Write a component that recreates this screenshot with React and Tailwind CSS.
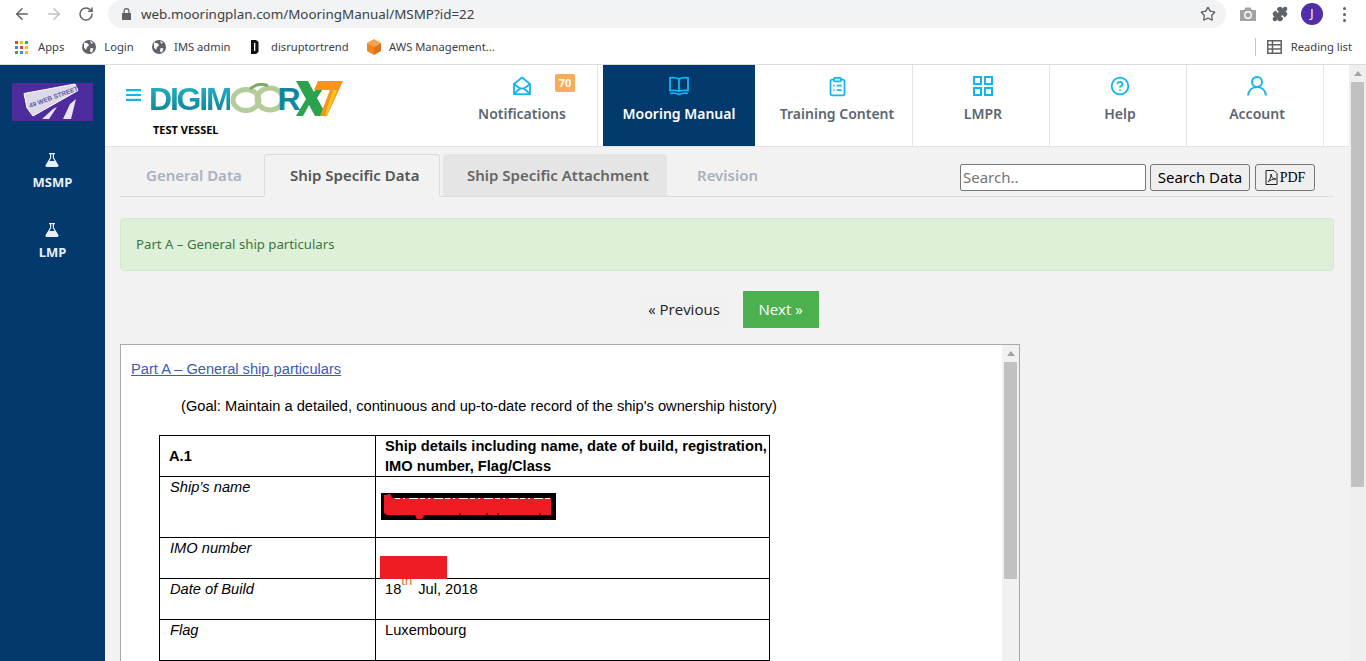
import { ArrowLeft, ArrowRight, RotateCw, Star, Puzzle, ClipboardList, CircleHelp } from 'lucide-react'

const bookmarks = [
  { label: 'Login', icon: 'globe' },
  { label: 'IMS admin', icon: 'globe' },
  { label: 'disruptortrend', icon: 'd' },
  { label: 'AWS Management...', icon: 'aws' },
]

function Globe() {
  return (
    <svg width="16" height="16" viewBox="0 0 16 16">
      <circle cx="8" cy="8" r="7" fill="#5f6368" />
      <path d="M3 3.500l4 1 1 2-2 1.500-1 3-2-2.500zM9.500 9l3 .5-1.500 4-2-1zM9 2l3 1.500-1.500 1.500z" fill="#fff" />
    </svg>
  )
}

function BookmarkIcon({ type }) {
  if (type === 'globe') return <Globe />
  if (type === 'd') {
    return (
      <svg width="16" height="16" viewBox="0 0 16 16">
        <path d="M3 1h5l2.500 2v10L8 15H3zM6 4v8h1.300V4z" fill="#111" fillRule="evenodd" />
      </svg>
    )
  }
  return (
    <svg width="16" height="18" viewBox="0 0 16 18">
      <path d="M8 1l7 4-7 4-7-4z" fill="#f7a14a" />
      <path d="M1 5l7 4v8l-7-4z" fill="#f58220" />
      <path d="M15 5l-7 4v8l7-4z" fill="#e0701a" />
    </svg>
  )
}

function AppsGrid() {
  const colors = ['#ea4335', '#fbbc04', '#34a853', '#4285f4', '#ea4335', '#fbbc04', '#34a853', '#4285f4', '#fbbc04']
  return (
    <div className="grid grid-cols-3 gap-[2px]">
      {colors.map((c, i) => (
        <span key={i} className="w-[3px] h-[3px]" style={{ backgroundColor: c }} />
      ))}
    </div>
  )
}

function BrowserChrome() {
  return (
    <div className="h-[65px] bg-white border-b border-[#dadce0] shrink-0">
      <div className="h-[30px] flex items-center">
        <div className="w-[108px] pl-[13px] flex items-center gap-[15px] text-[#5f6368] -mt-[2px]">
          <ArrowLeft size={18} strokeWidth={2} />
          <ArrowRight size={18} strokeWidth={2} className="text-[#bdc1c6] -ml-[1px]" />
          <RotateCw size={16} strokeWidth={2.2} />
        </div>
        <div className="w-[1118px] h-[28px] -mt-[2px] rounded-full bg-[#f1f3f4] flex items-center pl-[14px] pr-[10px]">
          <svg width="9" height="12" viewBox="0 0 9 12" fill="#5f6368">
            <path d="M0 5h9v7H0zM1.500 5V3a3 3 0 0 1 6 0v2H6.300V3a1.800 1.800 0 0 0-3.600 0v2z" />
          </svg>
          <span className="ml-[10px] flex-1 text-[13.4px] text-[#3c4043] font-['Noto_Sans',sans-serif]">
            web.mooringplan.com/MooringManual/MSMP?id=22
          </span>
          <Star size={16} strokeWidth={2} className="text-[#5f6368]" />
        </div>
        <div className="flex-1 flex items-center pl-[14px] -mt-[2px]">
          <svg width="16" height="14" viewBox="0 0 16 14">
            <path d="M0 3h4l1.500-2.500h5L12 3h4v11H0z" fill="#a3a3a3" />
            <circle cx="8" cy="8" r="3.200" fill="none" stroke="#fff" strokeWidth="1.400" />
          </svg>
          <Puzzle size={16} className="ml-[16px] text-[#5f6368] fill-[#5f6368]" />
          <div className="ml-[13px] w-[22px] h-[22px] rounded-full bg-[#512da8] text-white text-[12px] flex items-center justify-center font-['Noto_Sans',sans-serif]">
            J
          </div>
          <div className="flex flex-col gap-[3px] ml-[20px]">
            <span className="w-[3px] h-[3px] rounded-full bg-[#5f6368]" />
            <span className="w-[3px] h-[3px] rounded-full bg-[#5f6368]" />
            <span className="w-[3px] h-[3px] rounded-full bg-[#5f6368]" />
          </div>
        </div>
      </div>
      <div className="h-[34px] flex items-center pl-[15px] text-[11.2px] text-[#3c4043] font-['Noto_Sans',sans-serif]">
        <AppsGrid />
        <span className="ml-[10px] mr-[17px]">Apps</span>
        {bookmarks.map((b) => (
          <div key={b.label} className="flex items-center gap-[7px] mr-[17.5px]">
            <BookmarkIcon type={b.icon} />
            <span>{b.label}</span>
          </div>
        ))}
        <div className="ml-auto flex items-center">
          <span className="w-px h-[18px] bg-[#c4c7c5]" />
          <svg width="15" height="14" viewBox="0 0 15 14" className="ml-[11px]">
            <path d="M.8.8h13.400v12.400H.8zM5.500.8v12.400M.8 4.800h13.400M.8 9h13.400" fill="none" stroke="#5f6368" strokeWidth="1.500" />
          </svg>
          <span className="ml-[9px] mr-[14px]">Reading list</span>
        </div>
      </div>
    </div>
  )
}

function Flask() {
  return (
    <svg width="16" height="16" viewBox="0 0 16 16" fill="#e8eef5">
      <path d="M5 1h6v1.300h-1v3.400l4.400 7.300c.5.900-.1 2-1.100 2H2.700c-1 0-1.600-1.100-1.100-2L6 5.700V2.300H5zM7.200 2.300v3.800L5.500 9h5L8.800 6.100V2.300z" fillRule="evenodd" />
      <path d="M5.200 9.500h5.600l2 3.500c.2.400 0 .8-.4.800H3.600c-.4 0-.6-.4-.4-.8z" />
    </svg>
  )
}

function Sidebar() {
  return (
    <aside className="w-[105px] shrink-0 bg-[#03396c] flex flex-col items-center pt-[18px] font-['Noto_Sans',sans-serif]">
      <svg width="81" height="38" viewBox="0 0 81 38" className="-ml-[1px]">
        <rect width="81" height="38" fill="#4f2c9e" />
        <path d="M12 10.500L63 1l3 6.500L21 33l-6-8z" fill="#dcd9e8" stroke="#fff" />
        <path d="M30 36l11-10 4-2-8 12zM51 36l7-15 6-5-5 20z" fill="#e8e6f0" />
        <text x="18" y="25" fontSize="6.500" fontWeight="700" fill="#6a5aa0" transform="rotate(-20 18 25)" fontFamily="Liberation Sans">
          49 WEB STREET
        </text>
      </svg>
      <div className="mt-[31px] flex flex-col items-center gap-[3px]">
        <Flask />
        <span className="text-[13px] font-bold text-[#e8eef5] leading-[22px]">MSMP</span>
      </div>
      <div className="mt-[29px] flex flex-col items-center gap-[3px]">
        <Flask />
        <span className="text-[13px] font-bold text-[#e8eef5] leading-[22px]">LMP</span>
      </div>
    </aside>
  )
}

function Logo() {
  return (
    <div className="flex flex-col">
      <div className="flex items-center h-[37px]">
        <span className="-ml-[2px] text-[32px] leading-none font-bold tracking-[-2.2px] font-['Liberation_Sans',sans-serif] bg-gradient-to-b from-[#27b4c8] to-[#0f7f94] bg-clip-text text-transparent">
          DIGIM
        </span>
        <svg width="57" height="30" viewBox="0 0 57 30" className="mt-[-2px]">
          <ellipse cx="16" cy="17" rx="13" ry="10.500" fill="none" stroke="#b3cc9a" strokeWidth="5" />
          <ellipse cx="40" cy="16" rx="13" ry="11" fill="none" stroke="#b3cc9a" strokeWidth="5" />
          <path d="M20 6c6-5 12-6 18-3" fill="none" stroke="#7ea866" strokeWidth="3" />
        </svg>
        <span className="text-[32px] leading-none font-bold font-['Liberation_Sans',sans-serif] text-[#12869f] -ml-[10px]">R</span>
        <svg width="47" height="35" viewBox="0 0 47 35" className="-ml-[5px]">
          <path d="M0 0h12l6 11 7-11h7L21 17l10 18H19l-6-11-6 11H0l10-17z" fill="#2ba24c" />
          <path d="M22 0h25L31 35h-7l10-26H18z" fill="#f7941d" />
          <path d="M29 33l8-24h4L31 35z" fill="#fcc31e" />
        </svg>
      </div>
      <span className="mt-[5px] ml-[2px] text-[11px] font-bold text-black font-['Noto_Sans',sans-serif]">TEST VESSEL</span>
    </div>
  )
}

const ICON = '#12b5f3'

function MailOpenIcon() {
  return (
    <svg width="20" height="20" viewBox="0 0 20 20" fill="none" stroke={ICON} strokeWidth="1.800" strokeLinejoin="round">
      <path d="M2 8l8-6.500L18 8v10.200H2z" />
      <path d="M2 8l6 4.500h4l6-4.500M2.500 17.500L8 12.500M17.500 17.500L12 12.500" />
    </svg>
  )
}

function BookIcon() {
  return (
    <svg width="20" height="20" viewBox="0 0 20 20" fill="none" stroke={ICON} strokeWidth="1.800">
      <path d="M10 3C8.500 1.800 5 1.500 1 1.800v12.700c4-.3 7.500 0 9 1 1.500-1 5-1.300 9-1V1.800C15 1.500 11.500 1.800 10 3zM10 3v12.500" />
      <path d="M1 17.300c4-.5 7-.2 9 1.200 2-1.400 5-1.700 9-1.200" />
    </svg>
  )
}

function GridIcon() {
  return (
    <svg width="20" height="20" viewBox="0 0 20 20" fill="none" stroke={ICON} strokeWidth="2">
      <path d="M1 1h7v7H1zM12 1h7v7h-7zM1 12h7v7H1zM12 12h7v7h-7z" />
    </svg>
  )
}

function AccountIcon() {
  return (
    <svg width="20" height="20" viewBox="0 0 20 20" fill="none" stroke={ICON} strokeWidth="2">
      <circle cx="10" cy="6" r="5" />
      <path d="M1 19.500c.5-5 4-8.500 9-8.500s8.500 3.500 9 8.500" />
    </svg>
  )
}

const navItems = [
  { label: 'Notifications', w: 'w-[152px] pl-[1px]', icon: <MailOpenIcon />, badge: '70' },
  { label: 'Mooring Manual', w: 'w-[152px] ml-[5px]', icon: <BookIcon />, active: true },
  { label: 'Training Content', w: 'w-[158px] pl-[7px]', icon: <ClipboardList size={21} strokeWidth={2} color={ICON} /> },
  { label: 'LMPR', w: 'w-[137px] pl-[4px]', icon: <GridIcon /> },
  { label: 'Help', w: 'w-[137px] pl-[4px]', icon: <CircleHelp size={20} strokeWidth={2.2} color={ICON} /> },
  { label: 'Account', w: 'w-[137px] pl-[4px]', icon: <AccountIcon /> },
]

function Header() {
  return (
    <header className="h-[82px] shrink-0 bg-white border-b border-[#e4e4e4] flex pl-[21px]">
      <div className="w-[320px] shrink-0 flex pt-[15px]">
        <svg width="15" height="12" viewBox="0 0 15 12" fill={ICON} className="mt-[9px] mr-[10px]">
          <path d="M0 0h15v2.200H0zM0 4.900h15v2.200H0zM0 9.800h15V12H0z" />
        </svg>
        <Logo />
      </div>
      {navItems.map((item) => (
        <div
          key={item.label}
          className={`${item.w} shrink-0 h-[81px] relative flex flex-col items-center pt-[9px] font-['Noto_Sans',sans-serif] ${
            item.active ? 'bg-[#03396c]' : 'border-r border-[#e4e4e4]'
          }`}
        >
          <div className="h-[24px] flex items-center">{item.icon}</div>
          <span className={`mt-[5px] text-[14px] font-semibold ${item.active ? 'text-white' : 'text-[#5c6670]'}`}>
            {item.label}
          </span>
          {item.badge && (
            <span className="absolute left-[109px] top-[9px] w-[20px] h-[18px] rounded-[2px] bg-[#f8ac59] text-white text-[11px] font-bold flex items-center justify-center">
              {item.badge}
            </span>
          )}
        </div>
      ))}
    </header>
  )
}

function Tabs() {
  return (
    <div className="h-[43px] mt-[7px] border-b border-[#dddddd] flex font-['Noto_Sans',sans-serif] text-[15px] font-semibold">
      <div className="w-[144px] pl-[26px] pt-[10px] text-[#a9b1bd]">General Data</div>
      <div className="w-[176px] h-[43px] pl-[25px] pt-[9px] text-[#555] bg-[#f2f2f2] border border-[#dddddd] border-b-[#f2f2f2] rounded-t-[3px]">
        Ship Specific Data
      </div>
      <div className="w-[224px] h-[42px] ml-[3px] pl-[24px] pt-[10px] text-[#666] bg-[#e5e5e5] rounded-t-[3px]">
        Ship Specific Attachment
      </div>
      <div className="pl-[30px] pt-[10px] text-[#a9b1bd]">Revision</div>
      <div className="ml-auto mr-[19px] mt-[10px] flex items-start font-normal text-[15px]">
        <input
          placeholder="Search.."
          className="w-[186px] h-[27px] pb-[2px] bg-white border border-[#767676] rounded-[2px] px-[2px] placeholder:text-[#757575] outline-none"
        />
        <button className="ml-[4px] w-[100px] h-[27px] pb-[1px] bg-[#efefef] border border-[#767676] rounded-[3px] text-black text-[15px]">
          Search Data
        </button>
        <button className="ml-[5px] w-[60px] h-[27px] bg-[#efefef] border border-[#767676] rounded-[3px] text-black flex items-center justify-center gap-[2px] font-['Liberation_Serif',serif] text-[14px]">
          <svg width="13" height="15" viewBox="0 0 13 15" fill="none" stroke="#222" strokeWidth="1">
            <path d="M1 .5h8l3 3v11H1zM3 12c2-2 3-5 3-8 0 3 2 5 5 5-3 0-6 1-8 3z" />
          </svg>
          PDF
        </button>
      </div>
    </div>
  )
}

const rows = [
  { label: 'Ship’s name', h: 'h-[61px]' },
  { label: 'IMO number', h: 'h-[41px]' },
  { label: 'Date of Build', h: 'h-[41px]', date: true },
  { label: 'Flag', h: 'h-[41px]', value: 'Luxembourg' },
]

function DocFrame() {
  return (
    <div className="w-[900px] h-[330px] shrink-0 bg-white border border-[#a9a9a9] border-b-0 flex overflow-hidden font-['Liberation_Sans',sans-serif] text-black">
      <div className="flex-1 relative pl-[10px] pt-[15px] text-[14.67px] leading-[18px]">
        <a className="text-[#3b5bb5] underline">Part A – General ship particulars</a>
        <p className="mt-[19px] ml-[50px]">(Goal: Maintain a detailed, continuous and up-to-date record of the ship's ownership history)</p>
        <table className="mt-[20px] ml-[28px] w-[611px] table-fixed border-collapse">
          <colgroup>
            <col className="w-[216px]" />
            <col />
          </colgroup>
          <tbody>
            <tr className="h-[41px] font-bold">
              <td className="border border-black pl-[9px]">A.1</td>
              <td className="border border-black pl-[9px] pr-0 leading-[20px]">
                Ship details including name, date of build, registration, IMO number, Flag/Class
              </td>
            </tr>
            {rows.map((r) => (
              <tr key={r.label} className={r.h}>
                <td className="border border-black pl-[10px] align-top italic pt-[1px]">{r.label}</td>
                <td className="border border-black pl-[9px] align-top pt-[1px]">
                  {r.date && (
                    <span>
                      18<sup className="text-[#c9772b] text-[13px] -top-[9px]">th</sup>
                      <span className="ml-[6px]">Jul, 2018</span>
                    </span>
                  )}
                  {r.value}
                </td>
              </tr>
            ))}
          </tbody>
        </table>
        {/* redactions sit on top of the table */}
        <svg width="175" height="27" viewBox="0 0 175 27" className="absolute left-[260px] top-[148px]">
          <rect width="175" height="27" fill="#000" />
          <path d="M3 2h3l1-1h2l1 1 1 3h159v17H43l-1 3-2 1h-4l-2-4H6l-3-2z" fill="#ee1c25" />
          <path d="M14 5.500h156" stroke="#fff" strokeWidth="1" strokeDasharray="5 3 2 4 9 2" />
          <path d="M78 21h2M105 21h2M116 21h2M158 21h2" stroke="#000" strokeWidth="1" />
        </svg>
        <div className="absolute left-[259px] top-[211px] w-[67px] h-[23px] bg-[#ee1c25]" />
      </div>
      <div className="w-[17px] shrink-0 bg-[#f1f1f1] flex flex-col items-center">
        <div className="h-[17px] flex items-center justify-center">
          <span className="border-x-[4px] border-x-transparent border-b-[5px] border-b-[#a3a3a3]" />
        </div>
        <div className="w-[13px] h-[217px] bg-[#c1c1c1]" />
      </div>
    </div>
  )
}

function PageScrollbar() {
  return (
    <div className="w-[17px] shrink-0 bg-[#efefef] flex flex-col items-center">
      <div className="h-[17px] flex items-center justify-center">
        <span className="border-x-[4px] border-x-transparent border-b-[5px] border-b-[#a3a3a3]" />
      </div>
      <div className="w-[13px] h-[405px] bg-[#c1c1c1]" />
    </div>
  )
}

export default function App() {
  return (
    <div className="w-[1366px] h-[661px] overflow-hidden flex flex-col bg-[#f2f2f2]">
      <BrowserChrome />
      <div className="flex-1 min-h-0 flex">
        <Sidebar />
        <div className="flex-1 min-w-0 flex flex-col">
          <Header />
          <main className="flex-1 min-h-0 px-[15px] flex flex-col">
            <Tabs />
            <div className="mt-[21px] h-[53px] shrink-0 bg-[#dff0d8] border border-[#d6e9c6] rounded-[4px] pl-[15px] pt-[1px] flex items-center text-[13.2px] text-[#3c763d] font-['Noto_Sans',sans-serif]">
              Part A – General ship particulars
            </div>
            <div className="mt-[20px] shrink-0 flex justify-center pr-[2px] font-['Open_Sans',sans-serif] text-[15px]">
              <button className="w-[101px] h-[37px] bg-[#f1f1f1] text-[#222]">« Previous</button>
              <button className="w-[76px] h-[37px] ml-[8px] bg-[#4caf50] text-white">Next »</button>
            </div>
            <div className="mt-[16px]">
              <DocFrame />
            </div>
          </main>
        </div>
        <PageScrollbar />
      </div>
    </div>
  )
}
